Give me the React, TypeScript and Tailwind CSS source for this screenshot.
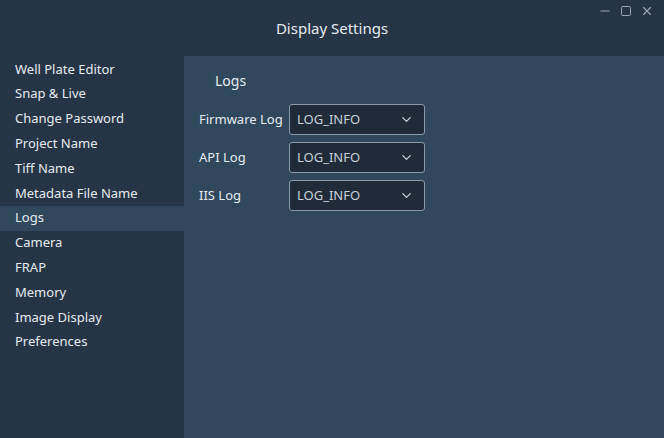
import { ChevronDown, Minus, Square, X } from "lucide-react";

const ITEMS = [
  "Well Plate Editor",
  "Snap & Live",
  "Change Password",
  "Project Name",
  "Tiff Name",
  "Metadata File Name",
  "Logs",
  "Camera",
  "FRAP",
  "Memory",
  "Image Display",
  "Preferences",
];

const LOGS = ["Firmware Log", "API Log", "IIS Log"];

export default function App() {
  return (
    <div
      className="flex h-[438px] w-[664px] flex-col bg-[#253545] text-[#e6ebf0]"
      style={{ fontFamily: '"Noto Sans", "Open Sans", sans-serif' }}
    >
      {/* title bar */}
      <div className="relative flex h-[56px] items-center justify-center text-[15px]">
        Display Settings
        <div className="absolute right-[10px] top-[4px] flex items-center gap-[8px] text-[#9aa6b2]">
          <Minus size={14} />
          <Square size={12} />
          <X size={14} />
        </div>
      </div>

      <div className="flex flex-1">
        {/* sidebar */}
        <div className="flex w-[184px] flex-col pt-[1px] text-[13px]">
          {ITEMS.map((it) => (
            <div
              key={it}
              className={`flex h-[24.8px] items-center pl-[15px] ${
                it === "Logs" ? "bg-[#30475c]" : ""
              }`}
            >
              {it}
            </div>
          ))}
        </div>

        {/* content */}
        <div className="flex-1 bg-[#30475c] pl-[15px] pt-[14px]">
          <div className="pl-[16px] text-[14px]">Logs</div>
          <div className="mt-[13px] flex flex-col gap-[7px] text-[13px]">
            {LOGS.map((l) => (
              <div key={l} className="flex items-center">
                <span className="w-[90px]">{l}</span>
                <div className="flex h-[31px] w-[136px] items-center justify-between rounded-[3px] border border-[#8c99a6] bg-[#1f2b38] pl-[7px] pr-[10px] text-[#c8d0d8]">
                  LOG_INFO
                  <ChevronDown size={15} strokeWidth={2} />
                </div>
              </div>
            ))}
          </div>
        </div>
      </div>
    </div>
  );
}
